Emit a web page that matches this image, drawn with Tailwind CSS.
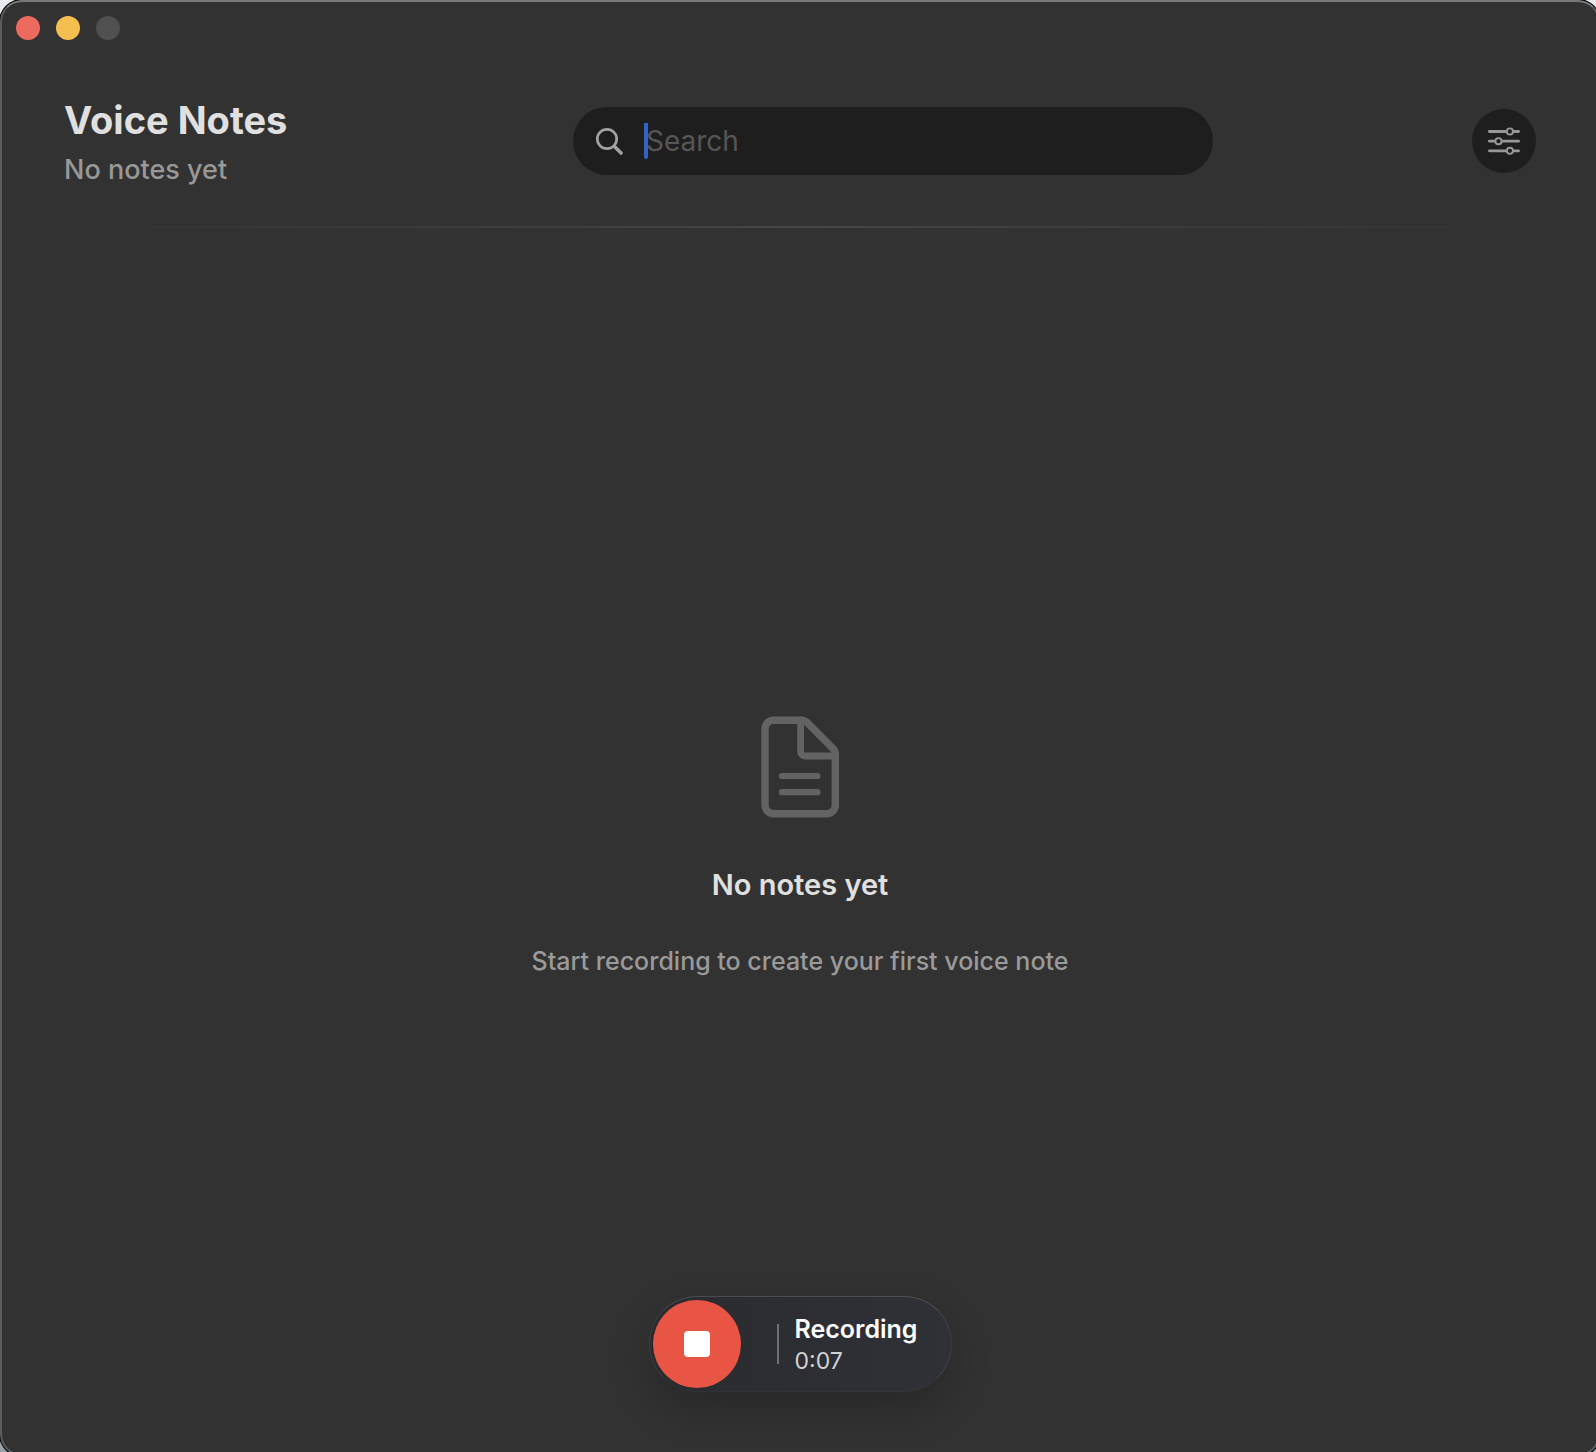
<!DOCTYPE html>
<html lang="en">
<head>
<meta charset="utf-8">
<meta name="viewport" content="width=device-width, initial-scale=1">
<title>Voice Notes</title>
<script src="https://cdn.jsdelivr.net/npm/@tailwindcss/browser@4"></script>
</head>
<body class="h-screen overflow-hidden bg-linear-to-b from-[#e8ecee] to-[#9aa3aa] font-['Inter',sans-serif]">
<div class="flex h-[calc(100%+4px)] w-[calc(100%+4px)] flex-col rounded-[22px] border-2 border-[#5c5c5c] border-t-[#7a7a7a] bg-[#323232] ring-1 ring-black">
  <!-- Window controls -->
  <div class="flex gap-4 px-3.5 pt-3.5">
    <button type="button" aria-label="Close" class="size-6 rounded-full bg-[#ed6a5f]"></button>
    <button type="button" aria-label="Minimize" class="size-6 rounded-full bg-[#f5bf4f]"></button>
    <button type="button" aria-label="Zoom" class="size-6 rounded-full bg-[#505050]"></button>
  </div>

  <header class="mt-14 flex items-center justify-between px-[62px]">
    <div class="w-[250px] whitespace-nowrap">
      <h1 class="text-[38px] leading-[48px] font-bold text-[#e0e0e0]">Voice Notes</h1>
      <p class="mt-2.5 text-[27px] leading-8 font-medium text-[#989898]">No notes yet</p>
    </div>
    <label class="flex h-[68px] w-[640px] items-center rounded-full bg-[#1e1e1e] pl-[22px]">
      <svg class="size-7" viewBox="0 0 28 28" fill="none" stroke="#a2a2a2" stroke-linecap="round" aria-hidden="true">
        <circle cx="12" cy="12" r="9.7" stroke-width="2.7"/>
        <path d="M19.5 19.5 26 26" stroke-width="3.6"/>
      </svg>
      <span class="relative ml-[21px] flex-1">
        <input type="search" aria-label="Search" placeholder="Search" class="w-full bg-transparent pl-0.5 text-[28px] leading-9 text-[#e0e0e0] outline-none placeholder:text-[#565656]">
        <span class="absolute top-1/2 left-0 h-9 w-1 -translate-y-1/2 rounded-b-sm bg-[#3063c8]"></span>
      </span>
    </label>
    <button type="button" aria-label="Filters" class="flex size-16 items-center justify-center rounded-full bg-[#1e1e1e]">
      <svg class="h-7 w-8" viewBox="0 0 32 28" fill="none" stroke="#989898" stroke-linecap="round" aria-hidden="true">
        <path d="M1.4 4.5h16.8M25.6 4.5h5M1.4 14.2h5.4M14.2 14.2h16.4M1.4 23.8h16.8M25.6 23.8h5" stroke-width="2.8"/>
        <circle cx="21.9" cy="4.5" r="3.1" stroke-width="1.9"/>
        <circle cx="10.5" cy="14.2" r="3.1" stroke-width="1.9"/>
        <circle cx="21.9" cy="23.8" r="3.1" stroke-width="1.9"/>
      </svg>
    </button>
  </header>
  <div class="mx-[62px] mt-10 h-0.5 bg-linear-to-r from-transparent via-white/10 to-transparent"></div>

  <!-- Empty state -->
  <main class="flex flex-1 flex-col items-center justify-center pt-[170px] text-center">
    <svg class="h-[104px] w-20" viewBox="0 0 80 104" fill="none" stroke="#636363" stroke-width="7.4" stroke-linejoin="round" stroke-linecap="round" aria-hidden="true">
      <path d="M13.5 5.3H41.500a8 8 0 0 1 5.700 2.400L73 33.700a8 8 0 0 1 2.300 5.600V90a8.500 8.500 0 0 1-8.500 8.700H13.500A8.500 8.500 0 0 1 5 90V14a8.500 8.500 0 0 1 8.500-8.700Z"/>
      <path d="M40.600 6V36.500a4.500 4.500 0 0 0 4.500 4.500H74" stroke-width="6.800"/>
      <path d="M22 61H57.500M22 77.200H57.500" stroke-width="6.200"/>
    </svg>
    <h2 class="mt-12 text-[29px] leading-9 font-semibold text-[#e0e0e0]">No notes yet</h2>
    <p class="mt-10 text-[25px] leading-9 font-medium text-[#9a9a9a]">Start recording to create your first voice note</p>
  </main>

  <!-- Recording control -->
  <footer class="flex justify-center pb-[62px]">
    <div class="flex h-24 w-[303px] items-center rounded-full border border-white/8 border-t-white/15 border-b-white/3 bg-linear-to-r from-[#2a2b2f] to-[#303136] pl-[3px] shadow-[0_16px_40px_rgba(0,0,0,0.2)]">
      <button type="button" aria-label="Stop recording" class="flex size-[88px] items-center justify-center rounded-full bg-[#e95545]">
        <span class="size-[26px] rounded-[4px] bg-white"></span>
      </button>
      <div class="ml-9 h-10 w-0.5 bg-[#6f7073]"></div>
      <div class="ml-4 pt-0.5">
        <div class="text-[25px] leading-8 font-semibold text-white">Recording</div>
        <div class="text-[23px] leading-8 text-[#d2d2d3]">0:07</div>
      </div>
    </div>
  </footer>
</div>
</body>
</html>
